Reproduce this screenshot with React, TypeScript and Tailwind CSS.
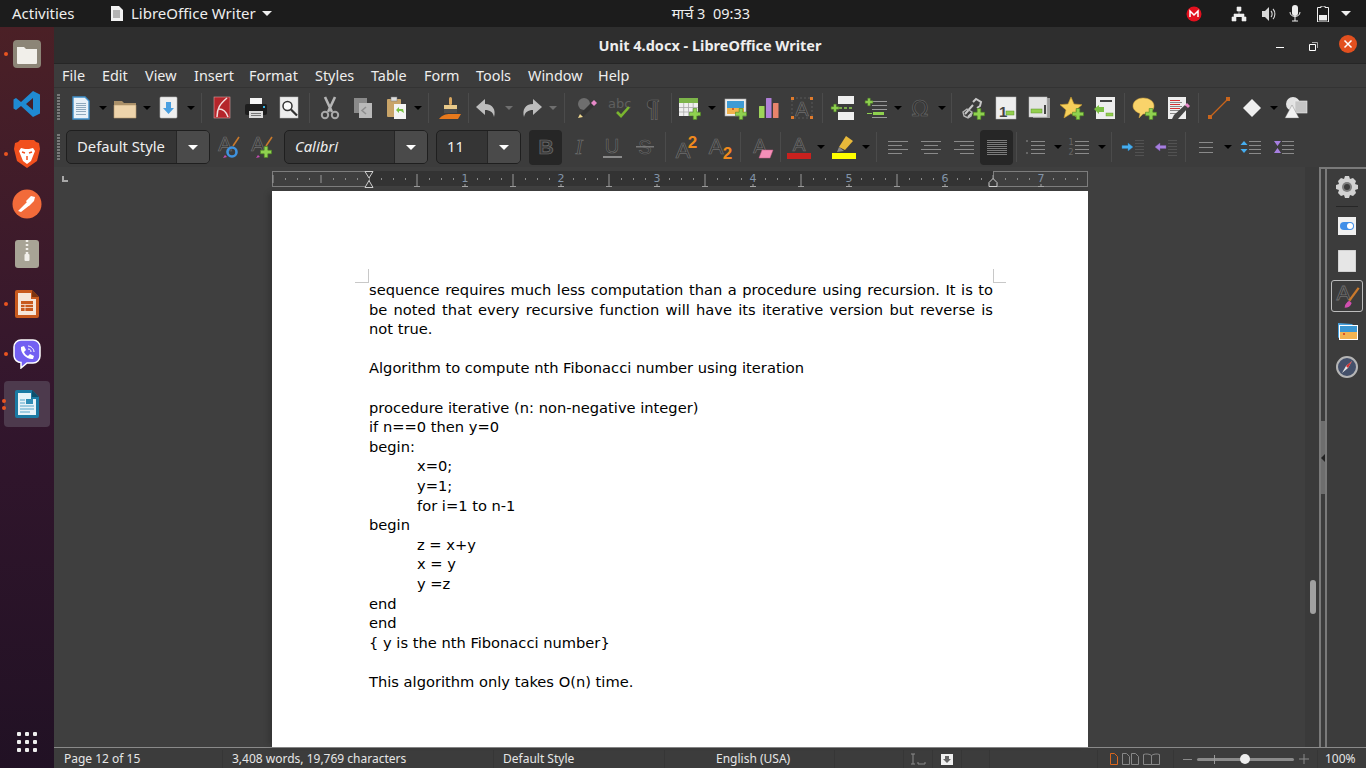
import type { ReactNode } from "react";

// 24 unit drawing area with some slack so that glyph boxes stay inside the svg
const Svg = ({ children }: { children: ReactNode }) => (
  <svg width="32" height="32" viewBox="-4 -4 32 32" className="shrink-0">
    {children}
  </svg>
);

const Plus = ({ x = 17, y = 18, r = 1 }: { x?: number; y?: number; r?: number }) => (
  <path
    transform={`translate(${x} ${y}) scale(${r})`}
    d="M-1.800 -5.500h3.600v3.700h3.700v3.600h-3.700v3.700h-3.600v-3.700h-3.700v-3.600h3.700z"
    fill="#8fd14f"
    stroke="#4d8a20"
    strokeWidth="0.6"
  />
);

const Letter = ({ x = 11, y = 17, size = 21, fill = "#333333", stroke = "#707070" }: { x?: number; y?: number; size?: number; fill?: string; stroke?: string }) => (
  <text x={x} y={y} fontSize={size} fontFamily="'Liberation Sans', sans-serif" fill={fill} stroke={stroke} strokeWidth="0.7" textAnchor="middle">
    A
  </text>
);

const lines = (ys: number[], x: number, w: number, color = "#8a8a8a") =>
  ys.map((y) => <rect key={y} x={x} y={y} width={w} height="1" fill={color} />);

// toolbar icons
const icons: Record<string, ReactNode> = {
  newdoc: (
    <Svg>
      <path d="M4 1h12l4 4v18H4z" fill="#e8f1f8" stroke="#3f8fc9" strokeWidth="1.4" />
      {lines([7, 9, 11, 13, 15, 18], 7, 10, "#8fa9bd")}
    </Svg>
  ),
  open: (
    <Svg>
      <path d="M1 5h8l2 2h12v15H1z" fill="#a98f68" />
      <path d="M1 9h22v13H1z" fill="#eed4ab" stroke="#b5986c" strokeWidth="0.6" />
    </Svg>
  ),
  save: (
    <Svg>
      <rect x="3" y="1" width="17" height="21" rx="1" fill="#efefef" stroke="#bbbbbb" strokeWidth="0.6" />
      <path d="M9 6h5v6h3l-5.500 6L6 12h3z" fill="#4a9fe0" />
    </Svg>
  ),
  pdf: (
    <Svg>
      <rect x="3" y="1" width="16" height="21" fill="#b5252b" stroke="#d9a0a0" strokeWidth="0.6" />
      <path d="M16 2C9 8 6 12 6 21M8 13c4 0 7 2 9 8" fill="none" stroke="#f2dede" strokeWidth="1.500" />
    </Svg>
  ),
  print: (
    <Svg>
      <rect x="6" y="2" width="12" height="8" fill="#f4f4f4" />
      <rect x="1" y="8" width="22" height="11" rx="2" fill="#1d1d1d" />
      <rect x="19" y="10" width="2" height="2" fill="#33b5e5" />
      <rect x="5" y="15" width="14" height="7" fill="#dcdcdc" />
      {lines([17, 19], 7, 10, "#777777")}
    </Svg>
  ),
  preview: (
    <Svg>
      <rect x="3" y="1" width="18" height="21" fill="#ededed" stroke="#bbbbbb" strokeWidth="0.5" />
      <circle cx="10.500" cy="10" r="4.500" fill="#fafafa" stroke="#333333" strokeWidth="1.500" />
      <path d="M14 13.500l6 6" stroke="#333333" strokeWidth="2.200" />
    </Svg>
  ),
  cut: (
    <Svg>
      <path d="M7 1l7 15M17 1l-7 15" stroke="#b5b5b5" strokeWidth="2.600" />
      <circle cx="7" cy="19" r="3.200" fill="none" stroke="#a8a8a8" strokeWidth="2" />
      <circle cx="17" cy="19" r="3.200" fill="none" stroke="#a8a8a8" strokeWidth="2" />
    </Svg>
  ),
  copy: (
    <Svg>
      <rect x="3" y="2" width="13" height="15" fill="#8a8a8a" />
      <rect x="8" y="7" width="13" height="15" fill="#b9b9b9" />
      <path d="M15 11l-4 3.500 4 3.500" fill="none" stroke="#8f8f8f" strokeWidth="1.600" />
    </Svg>
  ),
  paste: (
    <Svg>
      <rect x="3" y="3" width="14" height="18" rx="1" fill="#c9a468" />
      <rect x="7" y="1" width="6" height="4" fill="#dddddd" stroke="#777777" strokeWidth="0.5" />
      <rect x="10" y="8" width="12" height="15" fill="#f4f4f4" />
      <path d="M12 14l3-3v2h4l1 4-3-2h-2v2z" fill="#77c043" />
    </Svg>
  ),
  brush: (
    <Svg>
      <rect x="11" y="1" width="3" height="8" rx="1.500" fill="#d9a760" />
      <rect x="6" y="9" width="13" height="4" fill="#e8c98a" />
      <rect x="6" y="13" width="13" height="4" fill="#4d4d4d" />
      <path d="M1 23c3-4 7-5 11-5h11c-1 2-2 3-3 5z" fill="#e8791c" />
    </Svg>
  ),
  undo: (
    <Svg>
      <path d="M10 3L1 11l9 8v-5c5 0 8 2 9 7 2-7-1-13-9-13z" fill="#bdbdbd" />
    </Svg>
  ),
  redo: (
    <Svg>
      <path d="M14 3l9 8-9 8v-5c-5 0-8 2-9 7-2-7 1-13 9-13z" fill="#bdbdbd" />
    </Svg>
  ),
  find: (
    <Svg>
      <circle cx="9" cy="8" r="6" fill="#6e6e6e" />
      <path d="M3 22l2-4L16 7l3 3L8 21z" fill="#333333" />
      <path d="M16 7l3-3 3 3-3 3z" fill="#e889c9" />
      <path d="M3 22l2-4 3 3z" fill="#f0d890" />
    </Svg>
  ),
  spell: (
    <Svg>
      <text x="0" y="12" fontSize="13" fontFamily="'DejaVu Sans', sans-serif" fill="#5f5f5f">abc</text>
      <path d="M9 16l4 4 8-9" fill="none" stroke="#7ab52f" strokeWidth="2.600" />
    </Svg>
  ),
  pilcrow: (
    <Svg>
      <text x="12" y="21" fontSize="23" fontWeight="700" fontFamily="'Liberation Sans', sans-serif" fill="#333333" stroke="#707070" strokeWidth="0.6" textAnchor="middle">¶</text>
    </Svg>
  ),
  table: (
    <Svg>
      <rect x="1" y="2" width="19" height="18" fill="#efefef" />
      <rect x="1" y="2" width="19" height="5" fill="#7db54a" />
      <path d="M1 11.500h19M1 16h19M5.700 7v13M10.500 7v13M15.200 7v13" stroke="#a9a9a9" strokeWidth="0.8" />
      <Plus />
    </Svg>
  ),
  image: (
    <Svg>
      <rect x="1" y="3" width="21" height="17" fill="#eeeeee" stroke="#aaaaaa" strokeWidth="0.6" />
      <rect x="3" y="5" width="17" height="7" fill="#3e9bd5" />
      <rect x="3" y="12" width="17" height="6" fill="#f2b34c" />
      <rect x="8" y="12" width="2" height="2" fill="#d95f2a" />
      <Plus />
    </Svg>
  ),
  chart: (
    <Svg>
      <rect x="2" y="10" width="5.500" height="12" rx="0.5" fill="#9ed45a" />
      <rect x="9" y="2" width="5.500" height="20" rx="0.5" fill="#b07fd8" />
      <rect x="16" y="7" width="5.500" height="15" rx="0.5" fill="#e8846c" />
    </Svg>
  ),
  textbox: (
    <Svg>
      <path d="M2 2h20v20H2z" fill="none" stroke="#666666" strokeWidth="0.7" strokeDasharray="2 2" />
      <Letter x={12} y={20} size={20} />
      {[1, 20].map((x) => [1, 20].map((y) => <rect key={`${x}${y}`} x={x} y={y} width="3" height="3" fill="#e07b2c" />))}
    </Svg>
  ),
  pagebreak: (
    <Svg>
      <rect x="7" y="0" width="16" height="8" fill="#efefef" />
      <rect x="7" y="16" width="16" height="8" fill="#efefef" />
      <path d="M8 12h15" stroke="#8fd14f" strokeWidth="1.600" strokeDasharray="3 2" />
      <Plus x={4} y={12} r={0.7} />
    </Svg>
  ),
  field: (
    <Svg>
      {lines([5, 9, 13, 21], 8, 15, "#999999")}
      <Plus x={5} y={6} r={0.7} />
      <rect x="9" y="16" width="11" height="3" fill="#8fd14f" />
      <rect x="3" y="17" width="5" height="1" fill="#8fd14f" />
    </Svg>
  ),
  omega: (
    <Svg>
      <text x="12" y="20" fontSize="22" fontFamily="'DejaVu Sans', sans-serif" fill="#333333" stroke="#6a6a6a" strokeWidth="0.6" textAnchor="middle">Ω</text>
    </Svg>
  ),
  link: (
    <Svg>
      <path d="M4 18l8-9M7 21l4-4M12 6l3-3 5 3-1 4-3 2" fill="none" stroke="#c8c8c8" strokeWidth="2" />
      <path d="M2 16l4-3 5 3-1 4-3 2-4-2z" fill="none" stroke="#b5b5b5" strokeWidth="1.400" />
      <Plus x={18} y={18} />
    </Svg>
  ),
  footnote: (
    <Svg>
      <rect x="2" y="1" width="20" height="22" fill="#eeeeee" stroke="#bbbbbb" strokeWidth="0.5" />
      <text x="5" y="21" fontSize="15" fontWeight="700" fontFamily="'Liberation Sans', sans-serif" fill="#444444">1</text>
      <rect x="12" y="15" width="8" height="4" fill="#93cf4f" stroke="#5c8f2b" strokeWidth="0.5" />
    </Svg>
  ),
  endnote: (
    <Svg>
      <rect x="6" y="2" width="17" height="20" fill="#9a9a9a" />
      <rect x="2" y="1" width="18" height="20" fill="#e4e4e4" stroke="#bbbbbb" strokeWidth="0.5" />
      <rect x="4" y="13" width="11" height="4" fill="#93cf4f" stroke="#5c8f2b" strokeWidth="0.5" />
      <rect x="17" y="9" width="2" height="9" fill="#444444" />
    </Svg>
  ),
  bookmark: (
    <Svg>
      <path d="M11 1l3 7 8 .7-6 5.200 2 8-7-4.300-7 4.300 2-8L0 8.700 8 8z" fill="#f5cf5a" stroke="#c99b2c" strokeWidth="0.6" />
      <Plus x={18} y={18} />
    </Svg>
  ),
  xref: (
    <Svg>
      <rect x="3" y="1" width="19" height="22" fill="#eeeeee" />
      <rect x="7" y="4" width="12" height="2" fill="#444444" />
      <rect x="13" y="17" width="7" height="3" fill="#93cf4f" stroke="#5c8f2b" strokeWidth="0.4" />
      <path d="M1 13l5-4v2h5v5H6v2z" fill="#7cc043" />
    </Svg>
  ),
  comment: (
    <Svg>
      <path d="M10 2c6 0 11 3 11 8s-5 8-11 8l-4 4 1-4.500C3 16 0 13.500 0 10c0-5 5-8 10-8z" fill="#f9d36a" stroke="#d9a83a" strokeWidth="0.5" />
      <Plus x={18} y={18} />
    </Svg>
  ),
  track: (
    <Svg>
      <rect x="2" y="1" width="18" height="22" fill="#eeeeee" />
      {lines([4, 8, 12], 4, 10, "#d33030")}
      {lines([6, 10, 14, 17], 4, 12, "#888888")}
      <path d="M6 23l2-4 11-10 3 3-10 11z" fill="#444444" />
      <path d="M19 9l2-2 3 3-2 2z" fill="#e889c9" />
    </Svg>
  ),
  line: (
    <Svg>
      <path d="M3 21L21 3" stroke="#c9651c" strokeWidth="1.200" />
      <rect x="1" y="19" width="4" height="4" fill="#c9651c" />
      <rect x="19" y="1" width="4" height="4" fill="#c9651c" />
    </Svg>
  ),
  diamond: (
    <Svg>
      <path d="M12 3l9 9-9 9-9-9z" fill="#eeeeee" />
    </Svg>
  ),
  shapes: (
    <Svg>
      <circle cx="9" cy="8" r="7" fill="#e3e3e3" />
      <rect x="11" y="5" width="12" height="12" fill="#c5c5c5" stroke="#eeeeee" strokeWidth="0.6" />
      <path d="M8 9l7 13H1z" fill="#f2f2f2" stroke="#777777" strokeWidth="0.4" />
    </Svg>
  ),
  updatestyle: (
    <Svg>
      <Letter x={8} y={16} size={20} />
      <path d="M22 2l-6 9" stroke="#c9792c" strokeWidth="1.600" />
      <circle cx="15" cy="17" r="4.500" fill="none" stroke="#3f93e0" strokeWidth="2.600" />
      <path d="M6 23l4-1-2-2z" fill="#c44bb0" />
    </Svg>
  ),
  newstyle: (
    <Svg>
      <Letter x={8} y={16} size={20} />
      <path d="M22 2l-6 9" stroke="#c9792c" strokeWidth="1.600" />
      <Plus x={16} y={17} />
      <path d="M6 23l4-1-2-2z" fill="#c44bb0" />
    </Svg>
  ),
  bold: (
    <Svg>
      <text x="12" y="19" fontSize="21" fontFamily="'Liberation Sans', sans-serif" fontWeight="700" fill="#3a3a3a" stroke="#707070" strokeWidth="0.7" textAnchor="middle">B</text>
    </Svg>
  ),
  italic: (
    <Svg>
      <text x="12" y="19" fontSize="21" fontFamily="'Liberation Serif', serif" fontStyle="italic" fill="#333333" stroke="#6e6e6e" strokeWidth="0.7" textAnchor="middle">I</text>
    </Svg>
  ),
  underline: (
    <Svg>
      <text x="12" y="18" fontSize="20" fontFamily="'Liberation Sans', sans-serif" fill="#333333" stroke="#707070" strokeWidth="0.6" textAnchor="middle">U</text>
      <rect x="3" y="21" width="19" height="2" fill="#8a8a8a" />
    </Svg>
  ),
  strike: (
    <Svg>
      <text x="12" y="19" fontSize="20" fontFamily="'Liberation Sans', sans-serif" fill="#333333" stroke="#6a6a6a" strokeWidth="0.6" textAnchor="middle">S</text>
      <rect x="3" y="11" width="18" height="1.500" fill="#777777" />
    </Svg>
  ),
  sup: (
    <Svg>
      <Letter x={9} y={23} size={22} />
      <text x="18.500" y="13" fontSize="17" fontWeight="700" fontFamily="'Liberation Sans', sans-serif" fill="#f08a1d" textAnchor="middle">2</text>
    </Svg>
  ),
  sub: (
    <Svg>
      <Letter x={9} y={19} size={22} />
      <text x="20.500" y="24" fontSize="17" fontWeight="700" fontFamily="'Liberation Sans', sans-serif" fill="#f08a1d" textAnchor="middle">2</text>
    </Svg>
  ),
  eraser: (
    <Svg>
      <Letter x={10} y={18} size={20} />
      <path d="M12 15h11l-3 8H9z" fill="#f58fb8" stroke="#c95c89" strokeWidth="0.5" />
    </Svg>
  ),
  fontcolor: (
    <Svg>
      <Letter x={12} y={16} size={19} />
      <rect x="0" y="18" width="24" height="6" fill="#c9211e" />
    </Svg>
  ),
  highlight: (
    <Svg>
      <path d="M14 1l7 5-8 9-6-3z" fill="#e8b93a" />
      <path d="M7 12l5 4-7 1z" fill="#8a8a8a" />
      <rect x="0" y="18" width="24" height="6" fill="#ffff00" />
    </Svg>
  ),
  left: (
    <Svg>
      <rect x="2" y="6" width="20" height="1" fill="#8a8a8a" />
      <rect x="2" y="10" width="14" height="1" fill="#8a8a8a" />
      <rect x="2" y="14" width="20" height="1" fill="#8a8a8a" />
      <rect x="2" y="18" width="14" height="1" fill="#8a8a8a" />
    </Svg>
  ),
  center: (
    <Svg>
      <rect x="2" y="6" width="20" height="1" fill="#8a8a8a" />
      <rect x="5" y="10" width="14" height="1" fill="#8a8a8a" />
      <rect x="2" y="14" width="20" height="1" fill="#8a8a8a" />
      <rect x="5" y="18" width="14" height="1" fill="#8a8a8a" />
    </Svg>
  ),
  right: (
    <Svg>
      <rect x="2" y="6" width="20" height="1" fill="#8a8a8a" />
      <rect x="8" y="10" width="14" height="1" fill="#8a8a8a" />
      <rect x="2" y="14" width="20" height="1" fill="#8a8a8a" />
      <rect x="8" y="18" width="14" height="1" fill="#8a8a8a" />
    </Svg>
  ),
  justify: <Svg>{lines([5, 7, 9, 11, 13, 15, 17, 19], 2, 20, "#7c7c7c")}</Svg>,
  bullets: (
    <Svg>
      {lines([6, 10, 14, 18], 7, 14)}
      <rect x="2" y="5" width="2" height="2" fill="#666666" />
      <rect x="2" y="17" width="2" height="2" fill="#666666" />
    </Svg>
  ),
  numbers: (
    <Svg>
      {lines([6, 10, 14, 18], 7, 14)}
      <text x="0.5" y="10" fontSize="8" fontFamily="'DejaVu Sans', sans-serif" fill="#666666">1</text>
      <text x="0.5" y="20" fontSize="8" fontFamily="'DejaVu Sans', sans-serif" fill="#666666">2</text>
    </Svg>
  ),
  indent: (
    <Svg>
      {lines([5, 8, 11, 14, 17, 20], 14, 9, "#525252")}
      <path d="M1 10.500h6V8l5 4-5 4v-2.500H1z" fill="#46aef0" stroke="#2c7fb8" strokeWidth="0.4" />
    </Svg>
  ),
  outdent: (
    <Svg>
      {lines([5, 8, 11, 14, 17, 20], 14, 9, "#525252")}
      <path d="M12 10.500H6V8l-5 4 5 4v-2.500h6z" fill="#a77fe0" stroke="#7a58ad" strokeWidth="0.4" />
    </Svg>
  ),
  spacing: <Svg>{lines([7, 12, 17], 5, 14, "#8a8a8a")}</Svg>,
  lineup: (
    <Svg>
      {lines([6, 10, 14, 18], 11, 12)}
      <path d="M6 6l3.500 4h-7zM6 18l3.500-4h-7z" fill="#46aef0" />
    </Svg>
  ),
  linedown: (
    <Svg>
      {lines([6, 10, 14, 18], 11, 12)}
      <path d="M3 6h7l-3.500 5zM3 18h7l-3.500-5z" fill="#a77fe0" />
    </Svg>
  ),
};

const Tool = ({ n, on }: { n: string; on?: boolean }) => (
  <div className="flex h-[35px] w-[33px] shrink-0 items-center justify-center">
    {on ? <div className="flex h-[35px] w-[33px] items-center justify-center rounded-[4px] bg-[#262626]">{icons[n]}</div> : icons[n]}
  </div>
);

const Arrow = ({ dim }: { dim?: boolean }) => (
  <div className="flex w-[11px] shrink-0 items-center justify-center">
    <div className={`h-0 w-0 border-x-[4px] border-t-[4px] border-x-transparent ${dim ? "border-t-[#6f6f6f]" : "border-t-black"}`} />
  </div>
);

const Sep = ({ className }: { className: string }) => (
  <div className={`flex shrink-0 justify-center ${className}`}>
    <div className="h-[30px] w-px bg-[#4b4b4b]" />
  </div>
);

const Gripper = () => (
  <div className="flex w-[10px] shrink-0 justify-start pl-[3px]">
    <div className="h-[27px] w-[3px] bg-[repeating-linear-gradient(to_bottom,#7a7a7a_0,#7a7a7a_2px,transparent_2px,transparent_3px)]" />
  </div>
);

const Combo = ({ label, w, drop, italic }: { label: string; w: string; drop: string; italic?: boolean }) => (
  <div className={`flex h-[34px] shrink-0 overflow-hidden rounded-[5px] border border-[#1f1f1f] bg-[#353535] ${w}`}>
    <div className={`flex-1 pl-[10px] text-[14.8px] leading-[30px] text-[#eeeeee] ${italic ? "italic" : ""}`}>{label}</div>
    <div className={`flex items-center justify-center border-l border-[#262626] bg-[#4a4a4a] ${drop}`}>
      <div className="h-0 w-0 border-x-[5px] border-t-[5px] border-x-transparent border-t-white" />
    </div>
  </div>
);

const Ruler = () => {
  const ticks = [];
  for (let i = -8; i <= 59; i++) {
    const x = 97 + i * 12;
    if (x <= 0 || x >= 816) continue;
    if (i % 8 === 0 && i > 0) {
      ticks.push(
        <g key={i}>
          <text x={x} y={11} fontSize="11" textAnchor="middle" fontFamily="'DejaVu Sans', sans-serif" fill="#8294a8">{i / 8}</text>
          <path d={`M${x - 3} 15.500h6M${x} 13v2`} stroke="#a5a5a5" />
        </g>,
      );
    } else if (i % 4 === 0 && i !== 0) {
      const inCenter = x > 97 && x < 721;
      ticks.push(<path key={i} d={inCenter ? `M${x} 3v12M${x - 3} 15.500h6` : `M${x} 4v8`} stroke="#9a9a9a" fill="none" />);
    } else if (i !== 0) {
      ticks.push(<path key={i} d={`M${x + 0.5} 7v2`} stroke="#8a8a8a" fill="none" />);
    }
  }
  return (
    <svg width="816" height="17" viewBox="0 0 816 17" className="shrink-0">
      <rect x="97" y="0" width="624" height="15" fill="#333333" />
      <rect x="0.5" y="0.5" width="97" height="15" fill="#3f3f3f" stroke="#7d7d7d" />
      <rect x="721.500" y="0.5" width="94" height="15" fill="#3f3f3f" stroke="#7d7d7d" />
      {ticks}
      <path d="M93 0.500h8l-4 6.500zM93 16.500h8l-4-7z" fill="#3a3a3a" stroke="#cfcfcf" />
      <path d="M717 15.500v-4l4-4 4 4v4z" fill="#3a3a3a" stroke="#cfcfcf" />
    </svg>
  );
};

const DockDot = () => <div className="absolute left-[4px] size-[4px] rounded-full bg-[#e95420]" />;

const Dock = () => (
  <div className="flex w-[54px] shrink-0 flex-col items-center bg-gradient-to-b from-[#4b2026] via-[#33162d] to-[#211124]">
    <div className="relative mt-[2px] flex h-[50px] w-full items-center justify-center">
      <DockDot />
      <svg width="28" height="28" viewBox="0 0 28 28">
        <rect width="28" height="28" rx="4" fill="#8c8577" />
        <path d="M4 7h7l2 2h11v14a1 1 0 01-1 1H5a1 1 0 01-1-1z" fill="#f1efea" />
      </svg>
    </div>
    <div className="flex h-[50px] w-full items-center justify-center">
      <svg width="28" height="28" viewBox="0 0 28 28">
        <path d="M20 1l7 3.500v19L20 27 8 16l-5 4-2.500-1.500v-9L3 8l5 4zM20 8l-7 6 7 6z" fill="#1f8ad2" />
      </svg>
    </div>
    <div className="relative flex h-[50px] w-full items-center justify-center">
      <DockDot />
      <svg width="28" height="30" viewBox="0 0 28 30">
        <path d="M7 1h14l2 2 3 1 1 6-3 12-10 7-10-7L1 10l1-6 3-1z" fill="#f1501e" />
        <path d="M8 9l4 1h4l4-1 2 3-2 5-2 5-4 3-4-3-2-5-2-5z" fill="#fff" />
        <path d="M9 13l3 1M19 13l-3 1M14 17v4" stroke="#f1501e" strokeWidth="1.500" />
      </svg>
    </div>
    <div className="flex h-[50px] w-full items-center justify-center">
      <svg width="30" height="30" viewBox="0 0 30 30">
        <circle cx="15" cy="15" r="14.500" fill="#f26b3a" />
        <path d="M6 22l9-9 3 3-9 7zM14 12l5-5 4 1-1 4-5 5z" fill="#fff" />
      </svg>
    </div>
    <div className="flex h-[50px] w-full items-center justify-center">
      <svg width="24" height="28" viewBox="0 0 24 28">
        <rect width="24" height="28" rx="3" fill="#a8a496" />
        <path d="M12 0v14" stroke="#f1efea" strokeWidth="2.500" strokeDasharray="2 2" />
        <rect x="9.500" y="14" width="5" height="7" rx="1" fill="#f1efea" />
      </svg>
    </div>
    <div className="relative flex h-[50px] w-full items-center justify-center">
      <DockDot />
      <svg width="24" height="28" viewBox="0 0 24 28">
        <path d="M2 0h15l7 7v19a2 2 0 01-2 2H2a2 2 0 01-2-2V2a2 2 0 012-2z" fill="#c85a1e" />
        <path d="M3 3h13v6h5v16H3z" fill="#f6e7da" />
        <path d="M17 0l7 7h-7z" fill="#7d3510" />
        <rect x="6" y="11" width="12" height="10" fill="#c85a1e" />
        <path d="M6 14.500h12M6 17.500h12M10 14.500v7" stroke="#f6e7da" strokeWidth="0.8" />
      </svg>
    </div>
    <div className="relative flex h-[50px] w-full items-center justify-center">
      <DockDot />
      <svg width="28" height="30" viewBox="0 0 28 30">
        <path d="M8 1h12a7 7 0 017 7v9a7 7 0 01-7 7h-6l-6 5v-5.500a7 7 0 01-7-6.500V8a7 7 0 017-7z" fill="#7360f2" stroke="#fff" strokeWidth="1.500" />
        <path d="M8 8l3-1 2 4-2 2c1 2 2 3 4 4l2-2 4 2-1 3c-6 1-13-6-12-12z" fill="#fff" />
        <path d="M15 7c3 0 6 3 6 6M15 10c2 0 3 1 3 3" fill="none" stroke="#fff" />
      </svg>
    </div>
    <div className="relative mt-[2px] flex h-[46px] w-[46px] items-center justify-center rounded-[4px] bg-[#4d3a4d]">
      <div className="absolute -left-[2px] top-[18px] size-[4px] rounded-full bg-[#e95420]" />
      <div className="absolute -left-[2px] top-[25px] size-[4px] rounded-full bg-[#e95420]" />
      <svg width="24" height="28" viewBox="0 0 24 28">
        <path d="M2 0h15l7 7v19a2 2 0 01-2 2H2a2 2 0 01-2-2V2a2 2 0 012-2z" fill="#1b7aa3" />
        <path d="M3 3h13v6h5v16H3z" fill="#e8f3f8" />
        <path d="M17 0l7 7h-7z" fill="#0e4f6c" />
        <rect x="11" y="9" width="7" height="5" fill="#2f8db5" />
        <path d="M5 10h5M5 13h5M5 16h14M5 19h14M5 22h10" stroke="#53a6c9" strokeWidth="1.200" />
      </svg>
    </div>
    <div className="mt-auto mb-[16px] grid grid-cols-3 gap-[4px]">
      {Array.from({ length: 9 }, (_, i) => (
        <div key={i} className="size-[4px] rounded-[1px] bg-[#efefef]" />
      ))}
    </div>
  </div>
);

const TopBar = () => (
  <div className="flex h-[27px] shrink-0 items-center bg-[#1c1c1c] text-[15px] text-[#eeeeee]">
    <div className="w-[110px] pl-[12px]">Activities</div>
    <svg width="13" height="15" viewBox="0 0 13 15" className="mr-[8px]">
      <path d="M1 0h8l4 4v11H1z" fill="#f2f2f2" />
      <path d="M3 5h7M3 7h7M3 9h7M3 11h7" stroke="#555555" strokeWidth="0.8" />
    </svg>
    <div>LibreOffice Writer</div>
    <div className="ml-[6px] h-0 w-0 border-x-[5px] border-t-[5px] border-x-transparent border-t-[#eeeeee]" />
    <div className="flex-1 pr-[36px] text-center text-[14.5px]">मार्च 3&nbsp;&nbsp;09:33</div>
    <div className="flex w-[180px] items-center">
      <svg width="16" height="16" viewBox="0 0 16 16">
        <circle cx="8" cy="8" r="7.500" fill="#e3101e" />
        <path d="M4 11V5l4 4 4-4v6" fill="none" stroke="#fff" strokeWidth="1.500" />
      </svg>
      <svg width="16" height="16" viewBox="0 0 16 16" className="ml-[29px]">
        <path d="M6 1h4v4H6zM1 11h4v4H1zM11 11h4v4h-4zM8 5v3M3 11V8h10v3" fill="#eeeeee" stroke="#eeeeee" strokeWidth="0.6" />
      </svg>
      <svg width="16" height="16" viewBox="0 0 16 16" className="ml-[14px]">
        <path d="M1 5h3l4-4v14l-4-4H1z" fill="#d8d8d8" />
        <path d="M10 5c1.500 1.500 1.500 4.500 0 6M12 3c2.500 2.500 2.500 7.500 0 10" fill="none" stroke="#d8d8d8" strokeWidth="1.100" />
      </svg>
      <svg width="12" height="17" viewBox="0 0 12 17" className="ml-[12px]">
        <rect x="3" y="0" width="6" height="11" rx="3" fill="#eeeeee" />
        <path d="M1 7c0 6 10 6 10 0M6 12v4M3 16h6" fill="none" stroke="#eeeeee" strokeWidth="1" />
      </svg>
      <svg width="12" height="16" viewBox="0 0 12 16" className="ml-[16px]">
        <path d="M4 0h4v1.500h3.500V16H.5V1.500H4z" fill="none" stroke="#eeeeee" />
        <rect x="2" y="9" width="8" height="5.500" fill="#eeeeee" />
      </svg>
      <div className="ml-[12px] h-0 w-0 border-x-[5px] border-t-[5px] border-x-transparent border-t-[#eeeeee]" />
    </div>
  </div>
);

const TitleBar = () => (
  <div className="relative flex h-[37px] shrink-0 items-center justify-center border-b border-[#262626] bg-[#2e2e2e] pt-[1px] text-[14.5px] font-bold text-[#eeeeee]">
    Unit 4.docx - LibreOffice Writer
    <div className="absolute right-[82px] top-[20px] h-px w-[8px] bg-white" />
    <svg width="9" height="9" viewBox="0 0 9 9" className="absolute right-[48px] top-[15px]">
      <path d="M0.500 2.500h6v6h-6z" fill="none" stroke="#fff" />
      <path d="M3 0.500h5.500v5.500" fill="none" stroke="#aaaaaa" />
    </svg>
    <div className="absolute right-[9px] top-[8px] flex size-[18px] items-center justify-center rounded-full bg-[#e2501f]">
      <svg width="10" height="10" viewBox="0 0 10 10">
        <path d="M1.500 1.500l7 7M8.500 1.500l-7 7" stroke="#fff" strokeWidth="1.500" />
      </svg>
    </div>
  </div>
);

const menus = [
  ["File", "w-[40px]"],
  ["Edit", "w-[43px]"],
  ["View", "w-[49px]"],
  ["Insert", "w-[55px]"],
  ["Format", "w-[66px]"],
  ["Styles", "w-[56px]"],
  ["Table", "w-[53px]"],
  ["Form", "w-[52px]"],
  ["Tools", "w-[52px]"],
  ["Window", "w-[70px]"],
  ["Help", "w-[40px]"],
];

const MenuBar = () => (
  <div className="flex h-[24px] shrink-0 items-center border-b border-[#333333] bg-[#3c3c3c] pl-[8px] text-[14.4px] text-[#eeeeee]">
    {menus.map(([label, w]) => (
      <div key={label} className={`shrink-0 ${w}`}>
        {label}
      </div>
    ))}
  </div>
);

const Row1 = () => (
  <div className="flex h-[39px] shrink-0 items-center bg-[#3c3c3c]">
    <Gripper />
    <Tool n="newdoc" />
    <Arrow />
    <Tool n="open" />
    <Arrow />
    <Tool n="save" />
    <Arrow />
    <Sep className="w-[10px]" />
    <Tool n="pdf" />
    <Tool n="print" />
    <Tool n="preview" />
    <Sep className="w-[8px]" />
    <Tool n="cut" />
    <Tool n="copy" />
    <Tool n="paste" />
    <Arrow />
    <Sep className="w-[10px]" />
    <Tool n="brush" />
    <Sep className="w-[4px]" />
    <Tool n="undo" />
    <Arrow dim />
    <Tool n="redo" />
    <Arrow dim />
    <Sep className="w-[12px]" />
    <Tool n="find" />
    <Tool n="spell" />
    <Tool n="pilcrow" />
    <Sep className="w-[4px]" />
    <Tool n="table" />
    <Arrow />
    <div className="w-[2px] shrink-0" />
    <Tool n="image" />
    <Tool n="chart" />
    <Tool n="textbox" />
    <Sep className="w-[8px]" />
    <Tool n="pagebreak" />
    <Tool n="field" />
    <Arrow />
    <Tool n="omega" />
    <Arrow />
    <Sep className="w-[9px]" />
    <Tool n="link" />
    <Tool n="footnote" />
    <Tool n="endnote" />
    <Tool n="bookmark" />
    <Tool n="xref" />
    <Sep className="w-[7px]" />
    <Tool n="comment" />
    <Tool n="track" />
    <Sep className="w-[8px]" />
    <Tool n="line" />
    <Tool n="diamond" />
    <Arrow />
    <Tool n="shapes" />
  </div>
);

const Row2 = () => (
  <div className="flex h-[40px] shrink-0 items-center bg-[#3c3c3c]">
    <Gripper />
    <div className="w-[2px] shrink-0" />
    <Combo label="Default Style" w="w-[144px]" drop="w-[33px]" />
    <div className="w-[2px] shrink-0" />
    <Tool n="updatestyle" />
    <Tool n="newstyle" />
    <div className="w-[6px] shrink-0" />
    <Combo label="Calibri" w="w-[144px]" drop="w-[33px]" italic />
    <div className="w-[8px] shrink-0" />
    <Combo label="11" w="w-[85px]" drop="w-[33px]" />
    <div className="w-[8px] shrink-0" />
    <Tool n="bold" on />
    <Tool n="italic" />
    <Tool n="underline" />
    <Tool n="strike" />
    <Sep className="w-[8px]" />
    <Tool n="sup" />
    <Tool n="sub" />
    <Sep className="w-[10px]" />
    <Tool n="eraser" />
    <Sep className="w-[4px]" />
    <Tool n="fontcolor" />
    <Arrow />
    <div className="w-px shrink-0" />
    <Tool n="highlight" />
    <Arrow />
    <Sep className="w-[10px]" />
    <Tool n="left" />
    <Tool n="center" />
    <Tool n="right" />
    <Tool n="justify" on />
    <Sep className="w-[6px]" />
    <Tool n="bullets" />
    <Arrow />
    <Tool n="numbers" />
    <Arrow />
    <Sep className="w-[9px]" />
    <Tool n="indent" />
    <Tool n="outdent" />
    <Sep className="w-[7px]" />
    <Tool n="spacing" />
    <Arrow />
    <Tool n="lineup" />
    <Tool n="linedown" />
  </div>
);

const docLines: [string, "j" | "i" | ""][] = [
  ["sequence requires much less computation than a procedure using recursion. It is to", "j"],
  ["be noted that every recursive function will have its iterative version but reverse is", "j"],
  ["not true.", ""],
  ["\u00a0", ""],
  ["Algorithm to compute nth Fibonacci number using iteration", ""],
  ["\u00a0", ""],
  ["procedure iterative (n: non-negative integer)", ""],
  ["if n==0 then y=0", ""],
  ["begin:", ""],
  ["x=0;", "i"],
  ["y=1;", "i"],
  ["for i=1 to n-1", "i"],
  ["begin", ""],
  ["z = x+y", "i"],
  ["x = y", "i"],
  ["y =z", "i"],
  ["end", ""],
  ["end", ""],
  ["{ y is the nth Fibonacci number}", ""],
  ["\u00a0", ""],
  ["This algorithm only takes O(n) time.", ""],
];

const Page = () => (
  <div className="relative mx-auto h-full w-[816px] bg-white pl-[97px] pr-[95px] pt-[89px] font-['DejaVu_Sans',sans-serif] text-[14.67px] leading-[19.6px] text-black shadow-[-5px_0_6px_-2px_rgba(0,0,0,0.2)]">
    <div className="absolute left-[83px] top-[78px] h-[14px] w-[14px] border-b border-r border-[#c8c8c8]" />
    <div className="absolute left-[721px] top-[78px] h-[14px] w-[13px] border-b border-l border-[#c8c8c8]" />
    {docLines.map(([text, kind], i) => (
      <div key={i} className={kind === "j" ? "text-justify [text-align-last:justify]" : kind === "i" ? "pl-[48px]" : ""}>
        {text}
      </div>
    ))}
  </div>
);

const Sidebar = () => (
  <div className="flex w-[47px] shrink-0 border-t-2 border-[#7a7a7a] bg-[#3c3c3c]">
    <div className="relative h-full w-[8px] shrink-0 border-x-2 border-[#7a7a7a] bg-[#3c3c3c]">
      <div className="absolute left-0 top-[252px] flex h-[73px] w-[4px] items-center justify-center bg-[#6e6e6e]">
        <div className="h-0 w-0 border-y-[4px] border-r-[4px] border-y-transparent border-r-[#222222]" />
      </div>
    </div>
    <div className="flex flex-1 flex-col items-center pt-[6px]">
      <svg width="24" height="24" viewBox="0 0 24 24">
        <path d="M10 1h4l1 3 3-1 3 3-1 3 3 1v4l-3 1 1 3-3 3-3-1-1 3h-4l-1-3-3 1-3-3 1-3-3-1v-4l3-1-1-3 3-3 3 1z" fill="#d2d2d2" />
        <circle cx="12" cy="12" r="5" fill="#7d7d7d" />
        <circle cx="12" cy="12" r="3" fill="#3c3c3c" />
      </svg>
      <div className="mt-[7px] h-px w-[22px] bg-[#262626]" />
      <svg width="18" height="18" viewBox="0 0 18 18" className="mt-[10px]">
        <rect width="18" height="18" fill="#f0f0f0" />
        <rect x="2" y="5" width="14" height="8" rx="4" fill="#3f8ee8" />
        <circle cx="12" cy="9" r="3" fill="#fff" />
      </svg>
      <svg width="18" height="22" viewBox="0 0 18 22" className="mt-[15px]">
        <rect width="18" height="22" fill="#e6e6e6" stroke="#bdbdbd" />
      </svg>
      <div className="mt-[8px] flex h-[32px] w-[32px] items-center justify-center rounded-[3px] border border-[#bdbdbd]">
        <svg width="28" height="28" viewBox="0 0 24 24">
          <Letter x={9} y={15} size={18} />
          <path d="M22 5l-8 11" stroke="#c9792c" strokeWidth="2" />
          <path d="M10 22c0-3 2-5 4-6l2 2c-1 3-3 4-6 4z" fill="#d04fb0" />
        </svg>
      </div>
      <svg width="22" height="20" viewBox="0 0 22 20" className="mt-[9px]">
        <path d="M2 2l14 1 4 4-18 10z" fill="#4aa3df" />
        <rect x="3" y="4" width="19" height="15" fill="#fff" />
        <rect x="4" y="5" width="17" height="6" fill="#3b97d3" />
        <rect x="4" y="11" width="17" height="7" fill="#f4b34f" />
        <rect x="7" y="12" width="2" height="2" fill="#d9532a" />
      </svg>
      <svg width="22" height="22" viewBox="0 0 22 22" className="mt-[15px]">
        <circle cx="11" cy="11" r="10" fill="#44506a" stroke="#b5b5b5" strokeWidth="2" />
        <path d="M16 5l-4 7-6 5 4-7z" fill="#e6e6e6" />
        <path d="M16 5l-4 7-2-2z" fill="#d33030" />
      </svg>
    </div>
  </div>
);

const StatusCell = ({ className, children }: { className: string; children?: ReactNode }) => (
  <div className={`flex h-full shrink-0 items-center border-r border-[#363636] ${className}`}>{children}</div>
);

const StatusBar = () => (
  <div className="flex h-[21px] shrink-0 items-center border-t border-[#8a8a8a] bg-[#3c3c3c] pt-[2px] text-[12px] text-[#e6e6e6]">
    <StatusCell className="w-[169px] pl-[10px]">Page 12 of 15</StatusCell>
    <StatusCell className="w-[271px] pl-[9px]">3,408 words, 19,769 characters</StatusCell>
    <StatusCell className="w-[171px] pl-[9px]">Default Style</StatusCell>
    <StatusCell className="w-[170px] pl-[51px]">English (USA)</StatusCell>
    <StatusCell className="w-[69px]" />
    <StatusCell className="w-[29px] justify-center">
      <svg width="16" height="12" viewBox="0 0 16 12">
        <path d="M1 1h4M1 11h4M3 1v10" stroke="#8a8a8a" />
        <path d="M8 9v2h7V9" fill="none" stroke="#8a8a8a" />
      </svg>
    </StatusCell>
    <StatusCell className="w-[29px] justify-center">
      <svg width="12" height="11" viewBox="0 0 12 11">
        <rect width="12" height="11" fill="#f0f0f0" />
        <path d="M4 2h4v3h2l-4 4-4-4h2z" fill="#666666" />
      </svg>
    </StatusCell>
    <StatusCell className="w-[28px]" />
    <StatusCell className="w-[108px]" />
    <StatusCell className="w-[76px] justify-center gap-[4px] pr-[2px]">
      <svg width="8" height="12" viewBox="0 0 8 12">
        <path d="M.5.5h4l3 3v8h-7z" fill="none" stroke="#d9651c" />
      </svg>
      <svg width="17" height="12" viewBox="0 0 17 12">
        <path d="M.5.5h4l3 3v8h-7zM9.500.5h4l3 3v8h-7z" fill="none" stroke="#888888" />
      </svg>
      <svg width="17" height="12" viewBox="0 0 17 12">
        <path d="M8.500 2.500C7 1 3 .5.500 1.500v10h8zM8.500 2.500C10 1 14 .5 16.500 1.500v10h-8z" fill="none" stroke="#888888" />
      </svg>
    </StatusCell>
    <StatusCell className="w-[144px] gap-[5px] pl-[9px]">
      <div className="h-px w-[9px] bg-[#8a8a8a]" />
      <div className="relative h-[3px] w-[97px] rounded-sm bg-[#8a8a8a]">
        <div className="absolute left-[17px] -top-[3px] h-[9px] w-px bg-[#9a9a9a]" />
        <div className="absolute left-[43px] -top-[4px] size-[10px] rounded-full bg-[#eeeeee]" />
      </div>
      <svg width="10" height="10" viewBox="0 0 10 10">
        <path d="M5 0v10M0 5h10" stroke="#8a8a8a" />
      </svg>
    </StatusCell>
    <div className="pl-[7px]">100%</div>
  </div>
);

export default function App() {
  return (
    <div className="flex h-[768px] w-[1366px] flex-col overflow-hidden bg-[#3f3f3f] font-['Noto_Sans',sans-serif]">
      <TopBar />
      <div className="flex min-h-0 flex-1">
        <Dock />
        <div className="flex min-w-0 flex-1 flex-col">
          <TitleBar />
          <MenuBar />
          <Row1 />
          <Row2 />
          <div className="flex min-h-0 flex-1">
            <div className="flex min-w-0 flex-1 flex-col pl-[1px]">
              <div className="relative flex h-[24px] shrink-0 items-start justify-center pt-[4px]">
                <Ruler />
                <div className="absolute left-[7px] top-[9px] h-[6px] w-[6px] border-b-2 border-l-2 border-[#a8a8a8]" />
              </div>
              <div className="min-h-0 flex-1">
                <Page />
              </div>
            </div>
            <div className="relative w-[14px] shrink-0 bg-[#3a3a3a]">
              <div className="absolute left-[5px] top-[413px] h-[34px] w-[6px] rounded-full bg-[#a0a0a0]" />
            </div>
            <Sidebar />
          </div>
          <StatusBar />
        </div>
      </div>
    </div>
  );
}
